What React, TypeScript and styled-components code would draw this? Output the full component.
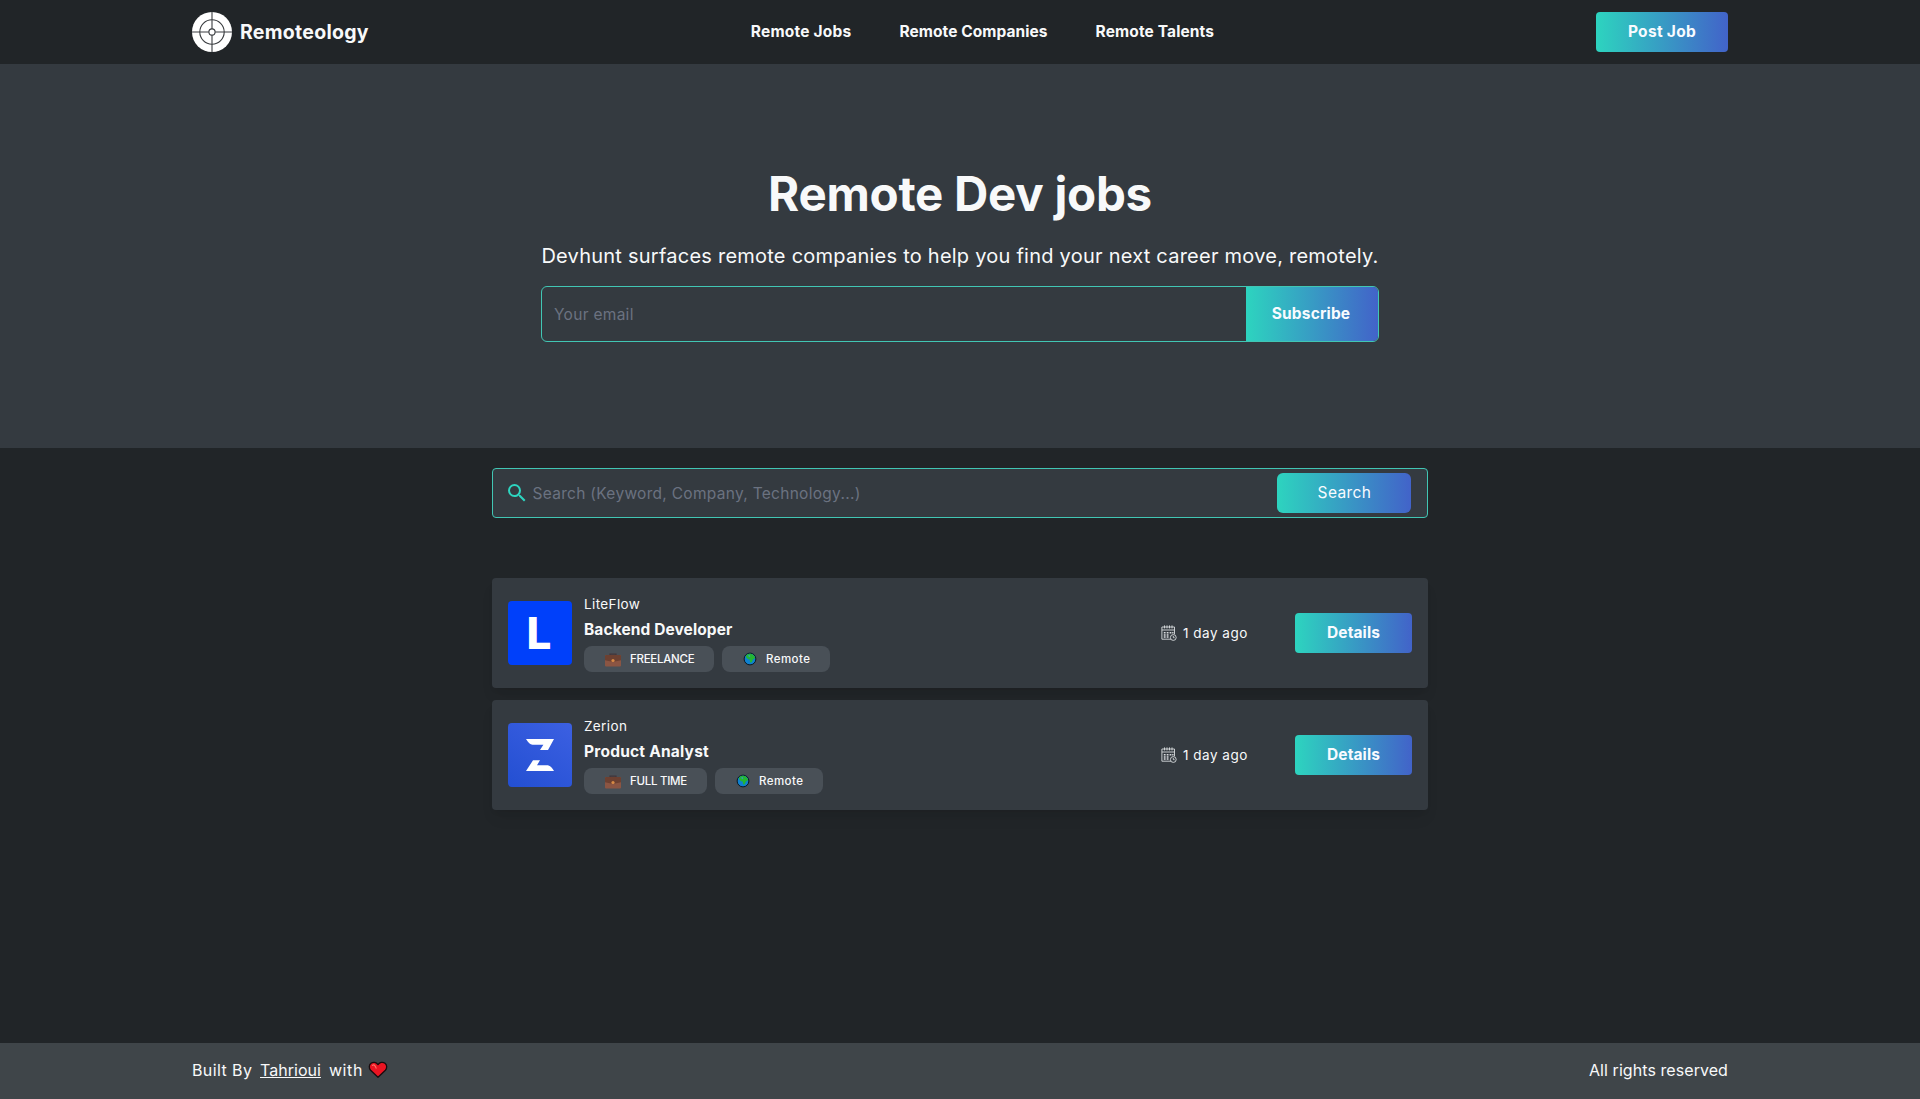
import React from "react";
import styled, { createGlobalStyle } from "styled-components";
import { MdSearch } from "react-icons/md";

const GlobalStyle = createGlobalStyle`
  *, *::before, *::after { box-sizing: border-box; }
  body {
    margin: 0;
    background: #212529;
    color: #f8f9fa;
    font-family: Inter, "Noto Sans", sans-serif;
    font-size: 15.5px;
  }
  h1, h2, p { margin: 0; }
  a { color: inherit; text-decoration: none; }
  svg { display: block; flex: none; }
`;

const gradient = "linear-gradient(90deg, #2dd4bf, #4263c9)";

const Page = styled.div`
  min-height: 1099px;
  display: flex;
  flex-direction: column;
  background: #212528;
`;

const Header = styled.header`
  height: 64px;
  padding: 0 10%;
  display: flex;
  align-items: center;
  justify-content: space-between;
`;

const Brand = styled.a`
  display: flex;
  align-items: center;
  gap: 8px;
  font-size: 19.5px;
  font-weight: 700;
  letter-spacing: 0.28px;
`;

const Nav = styled.nav`
  display: flex;
  gap: 48px;
  padding-bottom: 1px;
`;

const NavLink = styled.a<{ $tracking: number }>`
  font-weight: 700;
  letter-spacing: ${(p) => p.$tracking}px;
`;

const Button = styled.button<{ $width: number; $tracking?: number }>`
  width: ${(p) => p.$width}px;
  height: 40px;
  padding: 0 0 2px;
  border: 0;
  border-radius: 4px;
  background: ${gradient};
  color: #f8fbff;
  font: 700 15.5px Inter, sans-serif;
  letter-spacing: ${(p) => p.$tracking ?? 0.1}px;
  cursor: pointer;
`;

const SearchButton = styled(Button)`
  padding-left: 1px;
  border-radius: 6px;
  font-weight: 400;
`;

const Hero = styled.section`
  height: 384px;
  padding-top: 105px;
  display: flex;
  flex-direction: column;
  align-items: center;
  background: #343a40;
`;

const HeroTitle = styled.h1`
  font-size: 47.5px;
  line-height: 49px;
  font-weight: 700;
  letter-spacing: -0.27px;
`;

const HeroText = styled.p`
  margin: 24px 0 16px;
  font-size: 20px;
  line-height: 28px;
  letter-spacing: 0.24px;
  white-space: nowrap;
`;

const Field = styled.input<{ $inset: string }>`
  flex: 1;
  min-width: 0;
  height: 100%;
  padding: ${(p) => p.$inset};
  border: 0;
  outline: 0;
  background: transparent;
  color: #f8f9fa;
  font: 400 15.5px Inter, sans-serif;
  letter-spacing: 0.29px;
  &::placeholder { color: #6b7280; opacity: 1; }
`;

const Subscribe = styled.form`
  width: 838px;
  height: 56px;
  display: flex;
  border: 1px solid #41c6b4;
  border-radius: 6px;
  overflow: hidden;
`;

const SubscribeButton = styled(Button)`
  height: 100%;
  padding-right: 2px;
  border-radius: 0;
`;

const Main = styled.main`
  flex: 1;
  width: 936px;
  margin: 0 auto;
  padding-top: 20px;
`;

const SearchBar = styled.form`
  height: 50px;
  padding: 0 16px 0 12px;
  display: flex;
  align-items: center;
  border: 1px solid #41c6b4;
  border-radius: 4px;
  background: #343a40;
`;

const Jobs = styled.div`
  margin-top: 60px;
  display: flex;
  flex-direction: column;
  gap: 12px;
`;

const Card = styled.article`
  height: 110px;
  padding: 16px;
  display: flex;
  align-items: center;
  border-radius: 4px;
  background: #343a40;
  box-shadow: 0 10px 15px -3px rgba(0, 0, 0, 0.08), 0 4px 6px -2px rgba(0, 0, 0, 0.05);
`;

const LetterLogo = styled.div`
  width: 64px;
  height: 64px;
  padding-right: 2px;
  display: flex;
  align-items: center;
  justify-content: center;
  border-radius: 4px;
  background: #0040fa;
  color: #fff;
  font-size: 44px;
  font-weight: 800;
`;

const MarkLogo = styled.div`
  width: 64px;
  height: 64px;
  border-radius: 4px;
  background: linear-gradient(35deg, #234fd2, #3c60e2);
`;

const Info = styled.div`
  flex: 1;
  margin-left: 12px;
  display: flex;
  flex-direction: column;
  gap: 4px;
`;

const Company = styled.p`
  font-size: 13.5px;
  line-height: 20px;
  letter-spacing: 0.38px;
`;

const JobTitle = styled.h2<{ $tracking: number }>`
  font-size: 15.5px;
  line-height: 24px;
  font-weight: 700;
  letter-spacing: ${(p) => p.$tracking}px;
`;

const Tags = styled.div`
  display: flex;
  gap: 8px;
`;

const Tag = styled.span<{ $width: number; $tracking: number }>`
  width: ${(p) => p.$width}px;
  height: 26px;
  padding-left: 20px;
  display: flex;
  align-items: center;
  gap: 8px;
  border-radius: 8px;
  background: #495057;
  font-size: 11.5px;
  font-weight: 500;
  letter-spacing: ${(p) => p.$tracking}px;
  white-space: nowrap;
`;

const Posted = styled.div`
  width: 134px;
  display: flex;
  align-items: center;
  gap: 6px;
  font-size: 13.5px;
  letter-spacing: 0.5px;
`;

const Footer = styled.footer`
  height: 56px;
  padding: 0 10% 2px;
  display: flex;
  align-items: center;
  justify-content: space-between;
  background: #3f4549;
  font-size: 16px;
`;

const Credit = styled.div`
  display: flex;
  align-items: center;
`;

const Word = styled.span<{ $width: number; $tracking: number }>`
  width: ${(p) => p.$width}px;
  letter-spacing: ${(p) => p.$tracking}px;
  white-space: nowrap;
`;

const Author = styled.a`
  margin-right: 8px;
  font-size: 16px;
  letter-spacing: 0.03px;
  text-decoration: underline;
  text-decoration-skip-ink: none;
  text-decoration-thickness: 1px;
  text-underline-offset: 1px;
`;

const Rights = styled.span`
  letter-spacing: 0.07px;
`;

const Crosshair = () => (
  <svg width="40" height="40" viewBox="0 0 40 40" fill="none" stroke="#3a3d40" strokeWidth="1.1">
    <circle cx="20" cy="20" r="20" fill="#fff" stroke="none" />
    <circle cx="20" cy="20" r="12.2" />
    <circle cx="20" cy="20" r="3.1" />
    <path d="M20 0v16.9M20 23.1V40M0 20h16.9M23.1 20H40" />
  </svg>
);

const Briefcase = () => (
  <svg width="18" height="18" viewBox="0 0 18 18">
    <path d="M6 5.500V4.200h6v1.300" fill="none" stroke="#43353a" strokeWidth="1.2" />
    <rect x="1" y="5" width="16" height="11.500" rx="1" fill="#8b5543" />
    <path d="M2 5h14a1 1 0 0 1 1 1v4.200L11 11.400H7L1 10.200V6a1 1 0 0 1 1-1z" fill="#6c4031" />
    <circle cx="9" cy="10.500" r="1.600" fill="#d98a45" />
  </svg>
);

const Globe = () => (
  <svg width="16" height="16" viewBox="0 0 16 16">
    <circle cx="8" cy="8" r="5.900" fill="#0f80cf" stroke="#0b1720" strokeWidth="1" />
    <path d="M4 4.600C5.200 2.900 8 2.300 9.500 3l1.700.7 1.900 2.500-.6 1.600-1.700.7-.7 2.100-1.200 1.300-.9-1.200-.2-2-1.900-.8L4.200 6.600z" fill="#24b532" />
    <path d="m6 4.500 1.700-.6.700 1.300-1.200 1.100z" fill="#2f9fb8" />
  </svg>
);

const Heart = () => (
  <svg width="20" height="18" viewBox="0 0 20 18">
    <path
      d="M10 16.300 2.600 9.200C.6 7 1 3.800 3 2.300c2.200-1.700 5.300-1.100 7 1.300 1.700-2.400 4.800-3 7-1.300 2 1.500 2.400 4.700.4 6.900z"
      fill="#ec1422"
      stroke="#190c0f"
      strokeWidth="1.3"
      strokeLinejoin="round"
    />
    <path d="M4.400 4.400c.9-.7 1.700-.5 2.300.1.700 1 1.200 1.700 1.400 2.600" fill="none" stroke="#ff7468" strokeWidth="1.1" strokeLinecap="round" />
  </svg>
);

const CalendarClock = () => (
  <svg width="16" height="16" viewBox="0 0 16 16" fill="none" stroke="#d9dcdf" strokeWidth=".9">
    <path d="M10 14.200H.9V2h12.600v7.200M.9 5h12.600M3.500.4v3M6 .4v3M8.500.4v3M11 .4v3" />
    <path d="M2.800 7.700h1.800M5.700 7.700h1.800M8.600 7.700h1.800M11.200 7.700h1.300M2.800 9.900h1.800M5.700 9.900h1.800M2.800 12.100h1.800M5.700 12.100h1.800" strokeWidth="1.5" />
    <circle cx="12.300" cy="12.500" r="2.900" fill="#343a40" />
    <path d="M12.300 10.900v1.800h1.300" />
  </svg>
);

const ZerionMark = () => (
  <svg width="64" height="64" viewBox="0 0 64 64" fill="#fff">
    <path d="M18 16h28l-6 11h-8l3.400-5.300H24.500c-2.500 0-4-1.700-6.500-5.700z" />
    <path d="M25 37.300h7l-3 5h9.500c4 0 5.500 2.700 7.500 5.700H18z" />
  </svg>
);

const navItems = [
  { label: "Remote Jobs", tracking: 0.22 },
  { label: "Remote Companies", tracking: 0.06 },
  { label: "Remote Talents", tracking: 0.12 },
];

const jobs = [
  {
    company: "LiteFlow",
    title: "Backend Developer",
    tracking: 0.1,
    kind: "FREELANCE",
    kindWidth: 130,
    logo: <LetterLogo>L</LetterLogo>,
  },
  {
    company: "Zerion",
    title: "Product Analyst",
    tracking: 0.22,
    kind: "FULL TIME",
    kindWidth: 123,
    logo: <MarkLogo><ZerionMark /></MarkLogo>,
  },
];

export default function App() {
  return (
    <Page>
      <GlobalStyle />
      <Header>
        <Brand href="#"><Crosshair />Remoteology</Brand>
        <Nav>
          {navItems.map((n) => (
            <NavLink key={n.label} href="#" $tracking={n.tracking}>{n.label}</NavLink>
          ))}
        </Nav>
        <Button $width={132} $tracking={0.3}>Post Job</Button>
      </Header>

      <Hero>
        <HeroTitle>Remote Dev jobs</HeroTitle>
        <HeroText>Devhunt surfaces remote companies to help you find your next career move, remotely.</HeroText>
        <Subscribe>
          <Field $inset="1px 12px 0" placeholder="Your email" />
          <SubscribeButton type="button" $width={132} $tracking={0.17}>Subscribe</SubscribeButton>
        </Subscribe>
      </Hero>

      <Main>
        <SearchBar>
          <MdSearch size={24} color="#2dd4bf" />
          <Field $inset="1px 3.5px 0" placeholder="Search (Keyword, Company, Technology...)" />
          <SearchButton type="button" $width={134} $tracking={0.4}>Search</SearchButton>
        </SearchBar>

        <Jobs>
          {jobs.map((job) => (
            <Card key={job.company}>
              {job.logo}
              <Info>
                <Company>{job.company}</Company>
                <JobTitle $tracking={job.tracking}>{job.title}</JobTitle>
                <Tags>
                  <Tag $width={job.kindWidth} $tracking={-0.28}><Briefcase />{job.kind}</Tag>
                  <Tag $width={108} $tracking={0.45}><Globe />Remote</Tag>
                </Tags>
              </Info>
              <Posted><CalendarClock />1 day ago</Posted>
              <Button $width={117}>Details</Button>
            </Card>
          ))}
        </Jobs>
      </Main>

      <Footer>
        <Credit>
          <Word $width={68} $tracking={0.4}>Built By</Word>
          <Author href="#">Tahrioui</Author>
          <Word $width={39} $tracking={0.6}>with</Word>
          <Heart />
        </Credit>
        <Rights>All rights reserved</Rights>
      </Footer>
    </Page>
  );
}
